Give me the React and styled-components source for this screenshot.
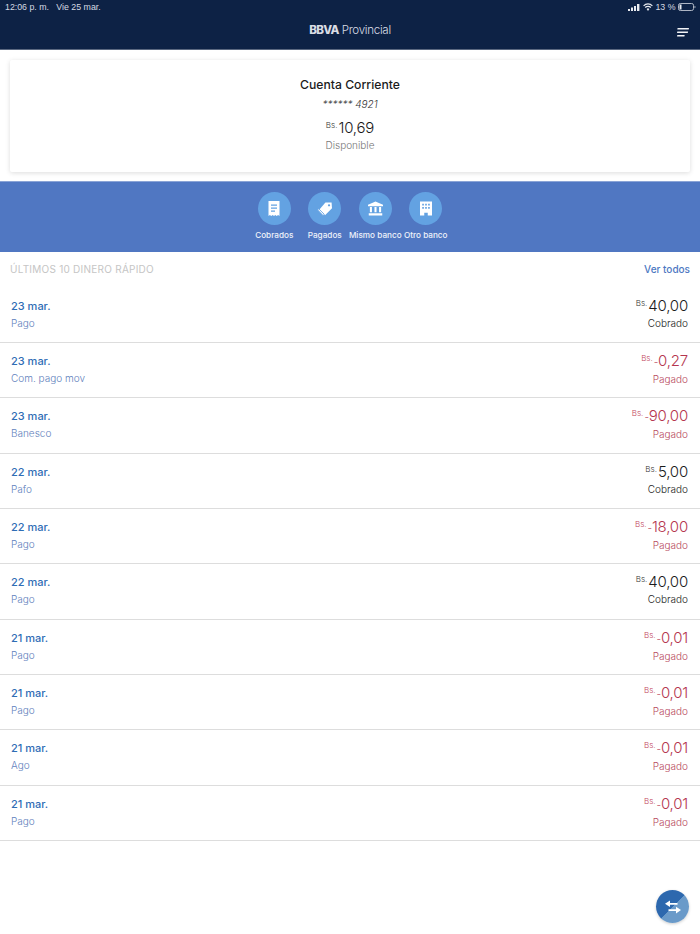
import React from "react";
import styled, { createGlobalStyle } from "styled-components";

const GlobalStyle = createGlobalStyle`
  html, body {
    margin: 0;
    padding: 0;
    background: #fff;
    font-family: Inter, "Liberation Sans", sans-serif;
  }
`;

const Page = styled.div`
  position: relative;
  width: 700px;
  height: 934px;
  overflow: hidden;
  background: #fff;
`;

const TopBar = styled.header`
  height: 49px;
  background: #0d2245;
  border-bottom: 1px solid #5a6880;
  display: flex;
  flex-direction: column;
`;

const StatusBar = styled.div`
  height: 14px;
  padding: 0 4px 0 5px;
  display: flex;
  justify-content: space-between;
  align-items: center;
  color: #d5dae3;
  font-family: "Liberation Sans", sans-serif;
  font-size: 8.8px;
`;

const StatusGroup = styled.div`
  display: flex;
  align-items: center;
  gap: 2.5px;
  white-space: pre;
`;

const NavRow = styled.div`
  flex: 1;
  display: flex;
  align-items: center;
  justify-content: center;
  position: relative;
  padding-bottom: 3px;
`;

const Logo = styled.div`
  color: #d9dde4;
  font-size: 11.6px;
  font-weight: 300;
  letter-spacing: -0.3px;
  b {
    font-weight: 800;
    letter-spacing: -0.7px;
  }
`;

const Menu = styled.svg`
  position: absolute;
  right: 11px;
  top: 14px;
`;

const AccountCard = styled.section`
  margin: 10px 10px 9px;
  height: 112px;
  box-sizing: border-box;
  padding-top: 16px;
  border-radius: 2px;
  background: #fff;
  box-shadow: 0 1px 5px rgba(0, 0, 0, 0.14);
  display: flex;
  flex-direction: column;
  align-items: center;
`;

const CardTitle = styled.div`
  font-size: 12.2px;
  line-height: 17px;
  font-weight: 500;
  color: #1b1b1b;
`;

const CardNumber = styled.div`
  font-size: 10px;
  line-height: 14px;
  font-style: italic;
  font-weight: 300;
  color: #333;
  margin-top: 4px;
`;

const CardAmount = styled.div`
  margin-top: 6px;
  line-height: 20px;
`;

const CardLabel = styled.div`
  font-size: 10px;
  line-height: 14px;
  font-weight: 300;
  color: #777;
`;

const Currency = styled.span`
  font-size: 8px;
  font-weight: 300;
  line-height: 0;
  vertical-align: 5px;
  margin-right: 1px;
  color: ${(p) => (p.$paid ? "#c2455c" : "#333")};
`;

const Value = styled.span`
  font-size: 15px;
  font-weight: 300;
  letter-spacing: -0.2px;
  color: ${(p) => (p.$paid ? "#b5354e" : "#1b1b1b")};
`;

const Sign = styled.span`
  font-size: 10px;
`;

const ActionBand = styled.nav`
  height: 71px;
  background: #5077c2;
  border-top: 1px solid #8ba4d6;
  box-sizing: border-box;
  display: flex;
  justify-content: center;
  padding-top: 10px;
`;

const Action = styled.div`
  width: 50.5px;
  display: flex;
  flex-direction: column;
  align-items: center;
`;

const ActionCircle = styled.div`
  width: 33px;
  height: 33px;
  border-radius: 50%;
  background: #63a2e2;
  display: flex;
  align-items: center;
  justify-content: center;
`;

const ActionLabel = styled.div`
  margin-top: 4px;
  font-size: 8.2px;
  line-height: 12px;
  font-weight: 500;
  color: #eef2fa;
  white-space: nowrap;
`;

const ListHeader = styled.div`
  height: 35.67px;
  padding: 0 10px 2px;
  box-sizing: border-box;
  display: flex;
  align-items: center;
  justify-content: space-between;
`;

const ListTitle = styled.div`
  font-size: 10px;
  font-weight: 400;
  letter-spacing: 0.25px;
  color: #c5c5c5;
`;

const SeeAll = styled.div`
  font-size: 10px;
  font-weight: 500;
  color: #4d78c2;
`;

const List = styled.ul`
  list-style: none;
  margin: 0;
  padding: 0;
`;

const Row = styled.li`
  height: 55.33px;
  box-sizing: border-box;
  padding: 8px 12px 0 11px;
  border-bottom: 1px solid #dddddd;
  display: flex;
  justify-content: space-between;
`;

const Column = styled.div`
  display: flex;
  flex-direction: column;
  align-items: ${(p) => (p.$right ? "flex-end" : "flex-start")};
  margin-top: ${(p) => (p.$right ? "-1px" : "0")};
`;

const DateText = styled.div`
  font-size: 11px;
  line-height: 20px;
  font-weight: 500;
  color: #2f6db5;
`;

const Concept = styled.div`
  font-size: 10px;
  line-height: 14px;
  font-weight: 300;
  color: #5f82bd;
`;

const AmountLine = styled.div`
  line-height: 20px;
`;

const State = styled.div`
  font-size: 10px;
  line-height: 14px;
  font-weight: 300;
  color: ${(p) => (p.$paid ? "#b84a60" : "#222")};
`;

const Fab = styled.div`
  position: absolute;
  left: 656px;
  top: 890px;
  width: 33px;
  height: 33px;
  border-radius: 50%;
  background: linear-gradient(135deg, #2d68ae 50%, #6a9ac9 50%);
  box-shadow: 0 1px 3px rgba(0, 0, 0, 0.2);
  display: flex;
  align-items: center;
  justify-content: center;
`;

const movements = [
  ["23 mar.", "Pago", "40,00", false],
  ["23 mar.", "Com. pago mov", "0,27", true],
  ["23 mar.", "Banesco", "90,00", true],
  ["22 mar.", "Pafo", "5,00", false],
  ["22 mar.", "Pago", "18,00", true],
  ["22 mar.", "Pago", "40,00", false],
  ["21 mar.", "Pago", "0,01", true],
  ["21 mar.", "Pago", "0,01", true],
  ["21 mar.", "Ago", "0,01", true],
  ["21 mar.", "Pago", "0,01", true],
];

const ReceiptIcon = () => (
  <svg width="14" height="16" viewBox="0 0 14 16">
    <path
      fill="#fff"
      d="M1.5 0h11v15l-1.4-1-1.4 1-1.4-1-1.3 1-1.3-1-1.4 1-1.4-1-1.4 1z"
    />
    <path fill="#63a2e2" d="M4 3.5h6v1.2H4zM4 6.5h6v1.2H4zM4 9.5h4v1.2H4z" />
  </svg>
);

const TagIcon = () => (
  <svg width="16" height="14" viewBox="0 0 18 16">
    <path fill="#fff" d="M9.5 0.5l7 .2.5 6.3-8 8.2-6.6-6.4z" />
    <circle cx="13.6" cy="3.8" r="1.3" fill="#63a2e2" />
    <path fill="#fff" stroke="#63a2e2" strokeWidth="1" d="M0.6 9l1.2-1.2 6.3 6.2-1.4 1.4z" />
  </svg>
);

const BankIcon = () => (
  <svg width="15" height="15" viewBox="0 0 16 15">
    <path fill="#fff" d="M8 0l8 3.6V5H0V3.6z" />
    <path fill="#fff" d="M2 6h2.2v5.5H2zM6.9 6h2.2v5.5H6.9zM11.8 6H14v5.5h-2.2zM.8 12.6h14.4V15H.8z" />
  </svg>
);

const BuildingIcon = () => (
  <svg width="12" height="15" viewBox="0 0 13 15">
    <path fill="#fff" d="M0 0h13v15H8.4v-3H4.6v3H0z" />
    <path
      fill="#63a2e2"
      d="M2.4 2.4h1.8v1.8H2.4zM5.6 2.4h1.8v1.8H5.6zM8.8 2.4h1.8v1.8H8.8zM2.4 6h1.8v1.8H2.4zM5.6 6h1.8v1.8H5.6zM8.8 6h1.8v1.8H8.8z"
    />
  </svg>
);

const actions = [
  ["Cobrados", <ReceiptIcon key="r" />],
  ["Pagados", <TagIcon key="t" />],
  ["Mismo banco", <BankIcon key="b" />],
  ["Otro banco", <BuildingIcon key="o" />],
];

const App = () => {
  return (
    <Page>
      <GlobalStyle />
      <TopBar>
        <StatusBar>
          <StatusGroup>{"12:06 p. m.   Vie 25 mar."}</StatusGroup>
          <StatusGroup>
            <svg width="12" height="7" viewBox="0 0 12 7">
              <path fill="#e8ebf0" d="M0 5h2v2H0zM3 3.5h2V7H3zM6 2h2v5H6zM9 0h2.4v7H9z" />
            </svg>
            <svg width="10" height="8" viewBox="0 0 10 8">
              <path
                fill="none"
                stroke="#e8ebf0"
                strokeWidth="1.2"
                d="M.6 2.8a6.2 6.2 0 0 1 8.8 0M2.2 4.5a3.9 3.9 0 0 1 5.6 0"
              />
              <path fill="#e8ebf0" d="M5 8L3.6 6a2 2 0 0 1 2.8 0z" />
            </svg>
            <span>13 %</span>
            <svg width="18" height="8" viewBox="0 0 18 8">
              <rect x=".5" y=".5" width="15" height="7" rx="1.8" fill="none" stroke="#aeb6c4" />
              <rect x="1.5" y="1.5" width="2" height="5" fill="#e8ebf0" />
              <path fill="#aeb6c4" d="M16.5 2.8c.8.2 1 .6 1 1.2s-.2 1-1 1.2z" />
            </svg>
          </StatusGroup>
        </StatusBar>
        <NavRow>
          <Logo>
            <b>BBVA</b> Provincial
          </Logo>
          <Menu width="12" height="9" viewBox="0 0 12 9">
            <path fill="#f2f4f7" d="M.6 0H12l-.3 1.6H.3zM.3 3.5h10.8l-.3 1.6H0zM.3 7h7.4l-.3 1.6H0z" />
          </Menu>
        </NavRow>
      </TopBar>

      <AccountCard>
        <CardTitle>Cuenta Corriente</CardTitle>
        <CardNumber>****** 4921</CardNumber>
        <CardAmount>
          <Currency>Bs.</Currency>
          <Value>10,69</Value>
        </CardAmount>
        <CardLabel>Disponible</CardLabel>
      </AccountCard>

      <ActionBand>
        {actions.map(([label, icon]) => (
          <Action key={label}>
            <ActionCircle>{icon}</ActionCircle>
            <ActionLabel>{label}</ActionLabel>
          </Action>
        ))}
      </ActionBand>

      <ListHeader>
        <ListTitle>ÚLTIMOS 10 DINERO RÁPIDO</ListTitle>
        <SeeAll>Ver todos</SeeAll>
      </ListHeader>

      <List>
        {movements.map(([date, concept, amount, paid], i) => (
          <Row key={i}>
            <Column>
              <DateText>{date}</DateText>
              <Concept>{concept}</Concept>
            </Column>
            <Column $right>
              <AmountLine>
                <Currency $paid={paid}>Bs.</Currency>
                <Value $paid={paid}>
                  {paid && <Sign>-</Sign>}
                  {amount}
                </Value>
              </AmountLine>
              <State $paid={paid}>{paid ? "Pagado" : "Cobrado"}</State>
            </Column>
          </Row>
        ))}
      </List>

      <Fab>
        <svg width="16" height="14" viewBox="0 0 16 14">
          <path fill="#fff" d="M5 0.5v2.4h7.5v1.8H5v2.4L0 3.8zM11 6.8v2.4H3.5V11H11v2.5l5-3.4z" />
        </svg>
      </Fab>
    </Page>
  );
};

export default App;
